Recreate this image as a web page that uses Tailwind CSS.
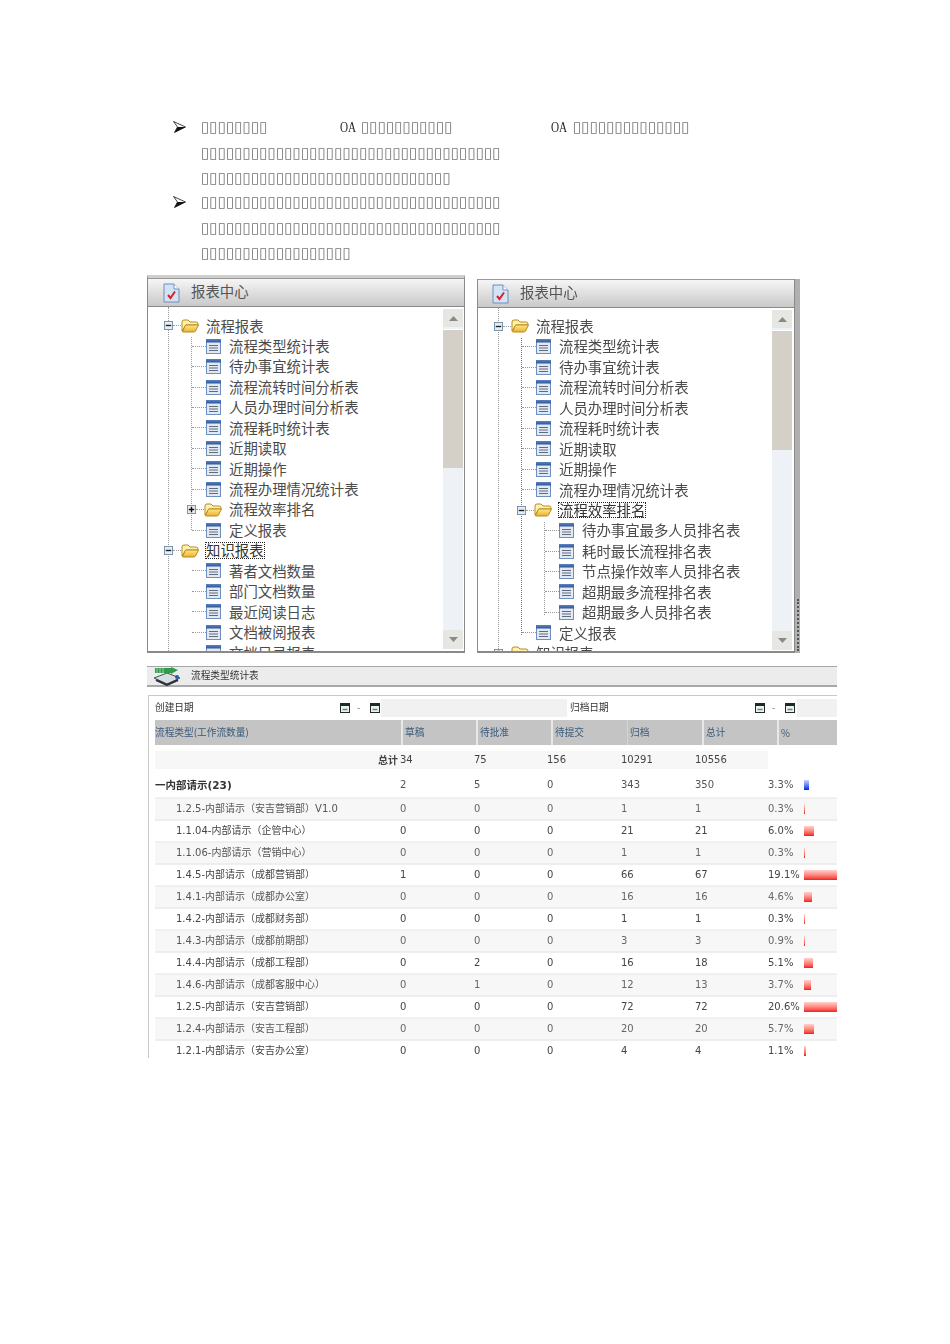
<!DOCTYPE html>
<html lang="zh">
<head>
<meta charset="utf-8">
<script src="https://cdn.jsdelivr.net/npm/@tailwindcss/browser@4"></script>
<title>报表中心</title>
</head>
<body class="bg-white">
<svg class="absolute w-0 h-0" width="0" height="0">
  <defs>
    <linearGradient id="dg" x1="0" y1="0" x2="0" y2="1"><stop offset="0" stop-color="#5b83c4"/><stop offset="1" stop-color="#2f5597"/></linearGradient>
    <linearGradient id="fg" x1="0" y1="0" x2="0" y2="1"><stop offset="0" stop-color="#ffe98a"/><stop offset="1" stop-color="#e8b030"/></linearGradient>
    <symbol id="doc" viewBox="0 0 15 15"><rect x="0.5" y="0.5" width="14" height="14" fill="#e3e9f3" stroke="#6d8fc2"/><rect x="0" y="0" width="15" height="3.5" fill="url(#dg)"/><path d="M3 6.500h9M3 9h9M3 11.500h9" stroke="#5f6c80" stroke-width="1"/></symbol>
    <symbol id="folder" viewBox="0 0 18 14"><path d="M1 12V3q0-2 2-2h4l2 2h6q2 0 2 2v1H5L1 12Z" fill="#fff2b0" stroke="#b98a1c"/><path d="M1.500 12.500 4.500 6h13l-3 6q-.5 1-2 1H2.500q-1.500 0-1-.5Z" fill="url(#fg)" stroke="#b98a1c"/></symbol>
    <symbol id="minus" viewBox="0 0 10 10"><rect x="0.500" y="0.500" width="9" height="9" fill="#e6ecf2" stroke="#6f8da8"/><path d="M2 5h6" stroke="#1f1f1f" stroke-width="1.500"/></symbol>
    <symbol id="plus" viewBox="0 0 10 10"><rect x="0.500" y="0.500" width="9" height="9" fill="#e6ecf2" stroke="#6f8da8"/><path d="M2 5h6M5 2v6" stroke="#111" stroke-width="1.500"/></symbol>
    <symbol id="report" viewBox="0 0 17 20"><path d="M1 1h10l5 5v13H1Z" fill="#d3e2f5" stroke="#6f8fbd"/><path d="M11 1v5h5" fill="#fff" stroke="#6f8fbd"/><path d="M5 12l2.500 3L12 8.500" fill="none" stroke="#d8232a" stroke-width="2"/></symbol>
    <symbol id="up" viewBox="0 0 9 5"><path d="M0 5 4.500 0 9 5Z" fill="#8a8a8a"/></symbol>
    <symbol id="down" viewBox="0 0 9 5"><path d="M0 0 4.500 5 9 0Z" fill="#8a8a8a"/></symbol>
    <symbol id="cal" viewBox="0 0 10 10"><rect x="0.500" y="0.500" width="9" height="9" fill="#eef2ee" stroke="#20282c"/><rect x="0" y="0" width="10" height="3" fill="#20282c"/><path d="M2.500 6.500h5" stroke="#4f9a4f" stroke-width="1.500"/></symbol>
    <symbol id="bullet" viewBox="0 0 13 12"><path d="M0.500 0.500 12.500 6 1.500 11.500 4.500 6Z" fill="#fff" stroke="#111" stroke-width="0.800"/><path d="M1.500 11.500 4.500 6H12.500Z" fill="#111"/></symbol>
  </defs>
</svg>

<div class="w-[950px] h-[1344px] overflow-hidden bg-white font-['Noto_Sans_CJK_SC',sans-serif]">

  <!-- paragraphs -->
  <div class="pt-[114px] pl-[173px] font-['DejaVu_Sans',sans-serif] text-[#777] text-[15px] tracking-[0.07px] whitespace-nowrap blur-[0.25px]">
    <div class="h-[26px] flex items-center relative">
      <svg class="w-[13px] h-[12px] mr-[15px]"><use href="#bullet"/></svg>
      <span class="w-[139px]">▯▯▯▯▯▯▯▯</span>
      <span class="w-[21px] origin-left scale-x-[.8] font-['Liberation_Serif',serif] text-[14px] tracking-normal text-[#222]">OA</span>
      <span class="w-[190px]">▯▯▯▯▯▯▯▯▯▯▯</span>
      <span class="w-[22px] origin-left scale-x-[.8] font-['Liberation_Serif',serif] text-[14px] tracking-normal text-[#222]">OA</span>
      <span>▯▯▯▯▯▯▯▯▯▯▯▯▯▯</span>
    </div>
    <div class="h-[26px] flex items-center pl-[28px]">▯▯▯▯▯▯▯▯▯▯▯▯▯▯▯▯▯▯▯▯▯▯▯▯▯▯▯▯▯▯▯▯▯▯▯▯</div>
    <div class="h-[24px] flex items-center pl-[28px]">▯▯▯▯▯▯▯▯▯▯▯▯▯▯▯▯▯▯▯▯▯▯▯▯▯▯▯▯▯▯</div>
    <div class="h-[24px] flex items-center">
      <svg class="w-[13px] h-[12px] mr-[15px]"><use href="#bullet"/></svg>
      <span>▯▯▯▯▯▯▯▯▯▯▯▯▯▯▯▯▯▯▯▯▯▯▯▯▯▯▯▯▯▯▯▯▯▯▯▯</span>
    </div>
    <div class="h-[28px] flex items-center pl-[28px]">▯▯▯▯▯▯▯▯▯▯▯▯▯▯▯▯▯▯▯▯▯▯▯▯▯▯▯▯▯▯▯▯▯▯▯▯</div>
    <div class="h-[22px] flex items-center pl-[28px]">▯▯▯▯▯▯▯▯▯▯▯▯▯▯▯▯▯▯</div>
  </div>

  <!-- two tree panels -->
  <div class="mt-[11px] ml-[147px] flex items-end gap-[12px] text-[14.4px] text-[#4b4b4b] blur-[0.35px]">

    <!-- panel 1 -->
    <div class="w-[318px] h-[378px] flex flex-col bg-white border-t-[3px] border-t-[#cfcfcf] border-x border-x-[#8a8a8a] border-b-2 border-b-[#8a8a8a] overflow-hidden">
      <div class="h-[29px] shrink-0 flex items-center bg-linear-to-b from-[#f6f6f6] to-[#c9c9c9] border-t border-t-[#999] border-b border-b-[#8a8a8a] text-[#555] pl-[15px]">
        <svg class="w-[17px] h-[20px] mr-[11px]"><use href="#report"/></svg><span class="pb-[3px]">报表中心</span>
      </div>
      <div class="flex-1 flex min-h-0">
        <div class="flex-1 relative overflow-hidden pt-[8.5px] leading-none">
          <div class="absolute left-[20px] top-0 bottom-0 border-l border-dotted border-[#999]"></div>
          <div class="absolute left-[43px] top-[30px] h-[193px] border-l border-dotted border-[#999]"></div>
          <div class="relative h-[20.45px] flex items-center pl-[16px]"><svg class="w-[9px] h-[9px]"><use href="#minus"/></svg><span class="w-[8px] border-t border-dotted border-[#999]"></span><svg class="w-[18px] h-[14px]"><use href="#folder"/></svg><span class="ml-[7px]">流程报表</span></div>
          <div class="relative h-[20.45px] flex items-center pl-[44px]"><span class="w-[14px] border-t border-dotted border-[#999]"></span><svg class="w-[15px] h-[15px]"><use href="#doc"/></svg><span class="ml-[8px]">流程类型统计表</span></div>
          <div class="relative h-[20.45px] flex items-center pl-[44px]"><span class="w-[14px] border-t border-dotted border-[#999]"></span><svg class="w-[15px] h-[15px]"><use href="#doc"/></svg><span class="ml-[8px]">待办事宜统计表</span></div>
          <div class="relative h-[20.45px] flex items-center pl-[44px]"><span class="w-[14px] border-t border-dotted border-[#999]"></span><svg class="w-[15px] h-[15px]"><use href="#doc"/></svg><span class="ml-[8px]">流程流转时间分析表</span></div>
          <div class="relative h-[20.45px] flex items-center pl-[44px]"><span class="w-[14px] border-t border-dotted border-[#999]"></span><svg class="w-[15px] h-[15px]"><use href="#doc"/></svg><span class="ml-[8px]">人员办理时间分析表</span></div>
          <div class="relative h-[20.45px] flex items-center pl-[44px]"><span class="w-[14px] border-t border-dotted border-[#999]"></span><svg class="w-[15px] h-[15px]"><use href="#doc"/></svg><span class="ml-[8px]">流程耗时统计表</span></div>
          <div class="relative h-[20.45px] flex items-center pl-[44px]"><span class="w-[14px] border-t border-dotted border-[#999]"></span><svg class="w-[15px] h-[15px]"><use href="#doc"/></svg><span class="ml-[8px]">近期读取</span></div>
          <div class="relative h-[20.45px] flex items-center pl-[44px]"><span class="w-[14px] border-t border-dotted border-[#999]"></span><svg class="w-[15px] h-[15px]"><use href="#doc"/></svg><span class="ml-[8px]">近期操作</span></div>
          <div class="relative h-[20.45px] flex items-center pl-[44px]"><span class="w-[14px] border-t border-dotted border-[#999]"></span><svg class="w-[15px] h-[15px]"><use href="#doc"/></svg><span class="ml-[8px]">流程办理情况统计表</span></div>
          <div class="relative h-[20.45px] flex items-center pl-[39px]"><svg class="w-[9px] h-[9px]"><use href="#plus"/></svg><span class="w-[8px] border-t border-dotted border-[#999]"></span><svg class="w-[18px] h-[14px]"><use href="#folder"/></svg><span class="ml-[7px]">流程效率排名</span></div>
          <div class="relative h-[20.45px] flex items-center pl-[44px]"><span class="w-[14px] border-t border-dotted border-[#999]"></span><svg class="w-[15px] h-[15px]"><use href="#doc"/></svg><span class="ml-[8px]">定义报表</span></div>
          <div class="relative h-[20.45px] flex items-center pl-[16px]"><svg class="w-[9px] h-[9px]"><use href="#minus"/></svg><span class="w-[8px] border-t border-dotted border-[#999]"></span><svg class="w-[18px] h-[14px]"><use href="#folder"/></svg><span class="ml-[7px] outline outline-dotted outline-[#222] text-[#333]">知识报表</span></div>
          <div class="relative h-[20.45px] flex items-center pl-[44px]"><span class="w-[14px] border-t border-dotted border-[#999]"></span><svg class="w-[15px] h-[15px]"><use href="#doc"/></svg><span class="ml-[8px]">著者文档数量</span></div>
          <div class="relative h-[20.45px] flex items-center pl-[44px]"><span class="w-[14px] border-t border-dotted border-[#999]"></span><svg class="w-[15px] h-[15px]"><use href="#doc"/></svg><span class="ml-[8px]">部门文档数量</span></div>
          <div class="relative h-[20.45px] flex items-center pl-[44px]"><span class="w-[14px] border-t border-dotted border-[#999]"></span><svg class="w-[15px] h-[15px]"><use href="#doc"/></svg><span class="ml-[8px]">最近阅读日志</span></div>
          <div class="relative h-[20.45px] flex items-center pl-[44px]"><span class="w-[14px] border-t border-dotted border-[#999]"></span><svg class="w-[15px] h-[15px]"><use href="#doc"/></svg><span class="ml-[8px]">文档被阅报表</span></div>
          <div class="relative h-[20.45px] flex items-center pl-[44px]"><span class="w-[14px] border-t border-dotted border-[#999]"></span><svg class="w-[15px] h-[15px]"><use href="#doc"/></svg><span class="ml-[8px]">文档目录报表</span></div>
        </div>
        <div class="w-[20px] mr-px mt-[2px] mb-[2px] shrink-0 flex flex-col bg-[#eef2f6]">
          <div class="h-[18px] flex items-center justify-center bg-[#e6e6e2]"><svg class="w-[9px] h-[5px]"><use href="#up"/></svg></div>
          <div class="h-[139px] mt-[2px] bg-[#d4d0c8] border-t border-white"></div>
          <div class="flex-1"></div>
          <div class="h-[19px] flex items-center justify-center bg-[#e6e6e2]"><svg class="w-[9px] h-[5px]"><use href="#down"/></svg></div>
        </div>
      </div>
    </div>

    <!-- panel 2 with resize bar -->
    <div class="flex h-[374px]">
      <div class="w-[318px] h-full flex flex-col bg-white border-x border-x-[#8a8a8a] border-b-2 border-b-[#8a8a8a] overflow-hidden">
        <div class="h-[29px] shrink-0 flex items-center bg-linear-to-b from-[#f6f6f6] to-[#c9c9c9] border-t border-t-[#999] border-b border-b-[#8a8a8a] text-[#555] pl-[14px]">
          <svg class="w-[17px] h-[20px] mr-[11px]"><use href="#report"/></svg><span class="pb-[3px]">报表中心</span>
        </div>
        <div class="flex-1 flex min-h-0">
          <div class="flex-1 relative overflow-hidden pt-[8px] leading-none">
            <div class="absolute left-[20px] top-0 bottom-0 border-l border-dotted border-[#999]"></div>
            <div class="absolute left-[43px] top-[30px] h-[297px] border-l border-dotted border-[#777]"></div>
            <div class="absolute left-[66px] top-[214px] h-[93px] border-l border-dotted border-[#999]"></div>
            <div class="relative h-[20.45px] flex items-center pl-[16px]"><svg class="w-[9px] h-[9px]"><use href="#minus"/></svg><span class="w-[8px] border-t border-dotted border-[#999]"></span><svg class="w-[18px] h-[14px]"><use href="#folder"/></svg><span class="ml-[7px]">流程报表</span></div>
            <div class="relative h-[20.45px] flex items-center pl-[44px]"><span class="w-[14px] border-t border-dotted border-[#999]"></span><svg class="w-[15px] h-[15px]"><use href="#doc"/></svg><span class="ml-[8px]">流程类型统计表</span></div>
            <div class="relative h-[20.45px] flex items-center pl-[44px]"><span class="w-[14px] border-t border-dotted border-[#999]"></span><svg class="w-[15px] h-[15px]"><use href="#doc"/></svg><span class="ml-[8px]">待办事宜统计表</span></div>
            <div class="relative h-[20.45px] flex items-center pl-[44px]"><span class="w-[14px] border-t border-dotted border-[#999]"></span><svg class="w-[15px] h-[15px]"><use href="#doc"/></svg><span class="ml-[8px]">流程流转时间分析表</span></div>
            <div class="relative h-[20.45px] flex items-center pl-[44px]"><span class="w-[14px] border-t border-dotted border-[#999]"></span><svg class="w-[15px] h-[15px]"><use href="#doc"/></svg><span class="ml-[8px]">人员办理时间分析表</span></div>
            <div class="relative h-[20.45px] flex items-center pl-[44px]"><span class="w-[14px] border-t border-dotted border-[#999]"></span><svg class="w-[15px] h-[15px]"><use href="#doc"/></svg><span class="ml-[8px]">流程耗时统计表</span></div>
            <div class="relative h-[20.45px] flex items-center pl-[44px]"><span class="w-[14px] border-t border-dotted border-[#999]"></span><svg class="w-[15px] h-[15px]"><use href="#doc"/></svg><span class="ml-[8px]">近期读取</span></div>
            <div class="relative h-[20.45px] flex items-center pl-[44px]"><span class="w-[14px] border-t border-dotted border-[#999]"></span><svg class="w-[15px] h-[15px]"><use href="#doc"/></svg><span class="ml-[8px]">近期操作</span></div>
            <div class="relative h-[20.45px] flex items-center pl-[44px]"><span class="w-[14px] border-t border-dotted border-[#999]"></span><svg class="w-[15px] h-[15px]"><use href="#doc"/></svg><span class="ml-[8px]">流程办理情况统计表</span></div>
            <div class="relative h-[20.45px] flex items-center pl-[39px]"><svg class="w-[9px] h-[9px]"><use href="#minus"/></svg><span class="w-[8px] border-t border-dotted border-[#999]"></span><svg class="w-[18px] h-[14px]"><use href="#folder"/></svg><span class="ml-[7px] outline outline-dotted outline-[#222] text-[#333]">流程效率排名</span></div>
            <div class="relative h-[20.45px] flex items-center pl-[67px]"><span class="w-[14px] border-t border-dotted border-[#999]"></span><svg class="w-[15px] h-[15px]"><use href="#doc"/></svg><span class="ml-[8px]">待办事宜最多人员排名表</span></div>
            <div class="relative h-[20.45px] flex items-center pl-[67px]"><span class="w-[14px] border-t border-dotted border-[#999]"></span><svg class="w-[15px] h-[15px]"><use href="#doc"/></svg><span class="ml-[8px]">耗时最长流程排名表</span></div>
            <div class="relative h-[20.45px] flex items-center pl-[67px]"><span class="w-[14px] border-t border-dotted border-[#999]"></span><svg class="w-[15px] h-[15px]"><use href="#doc"/></svg><span class="ml-[8px]">节点操作效率人员排名表</span></div>
            <div class="relative h-[20.45px] flex items-center pl-[67px]"><span class="w-[14px] border-t border-dotted border-[#999]"></span><svg class="w-[15px] h-[15px]"><use href="#doc"/></svg><span class="ml-[8px]">超期最多流程排名表</span></div>
            <div class="relative h-[20.45px] flex items-center pl-[67px]"><span class="w-[14px] border-t border-dotted border-[#999]"></span><svg class="w-[15px] h-[15px]"><use href="#doc"/></svg><span class="ml-[8px]">超期最多人员排名表</span></div>
            <div class="relative h-[20.45px] flex items-center pl-[44px]"><span class="w-[14px] border-t border-dotted border-[#999]"></span><svg class="w-[15px] h-[15px]"><use href="#doc"/></svg><span class="ml-[8px]">定义报表</span></div>
            <div class="relative h-[20.45px] flex items-center pl-[16px]"><svg class="w-[9px] h-[9px]"><use href="#plus"/></svg><span class="w-[8px] border-t border-dotted border-[#999]"></span><svg class="w-[18px] h-[14px]"><use href="#folder"/></svg><span class="ml-[7px]">知识报表</span></div>
          </div>
          <div class="w-[20px] mr-[2px] mt-[2px] mb-[1px] shrink-0 flex flex-col bg-[#eef2f6]">
            <div class="h-[18px] flex items-center justify-center bg-[#e6e6e2]"><svg class="w-[9px] h-[5px]"><use href="#up"/></svg></div>
            <div class="h-[120px] mt-[2px] bg-[#d4d0c8] border-t border-white"></div>
            <div class="flex-1"></div>
            <div class="h-[19px] flex items-center justify-center bg-[#e6e6e2]"><svg class="w-[9px] h-[5px]"><use href="#down"/></svg></div>
          </div>
        </div>
      </div>
      <div class="w-[5px] h-full flex flex-col justify-end items-center bg-[#b0b0b0] pb-[2px]">
        <div class="h-[52px] border-l-2 border-dotted border-[#555]"></div>
      </div>
    </div>
  </div>

  <!-- statistics panel -->
  <div class="mt-[13px] ml-[147px] w-[690px] h-[392px] overflow-hidden font-['DejaVu_Sans','Noto_Sans_CJK_SC',sans-serif] text-[10px] leading-none text-[#444] blur-[0.35px]">
    <div class="h-[21px] flex items-center bg-[#ececec] border-t border-t-[#a8a8a8] border-b-2 border-b-[#a8a8a8] pl-[6px]">
      <svg class="w-[28px] h-[19px] mr-[10px]" viewBox="0 0 28 19"><path d="M1 11 14 6l13 5-13 6Z" fill="#d8dde2" stroke="#4a4f55"/><path d="M3 13l11 5 11-5" fill="none" stroke="#2f3338" stroke-width="2"/><path d="M2 1h16V0l7 3-7 4V6H2Z" fill="#2f9a4a"/><path d="M4 1v5M7 1v5M10 1v5" stroke="#9fd8ac"/><circle cx="24" cy="10" r="2" fill="#1f5fb0"/></svg>
      <span class="text-[9.7px] font-['Noto_Sans_CJK_SC',sans-serif] text-[#333]">流程类型统计表</span>
    </div>
    <div class="mt-[8px] ml-px pl-[6px] pt-[3px] border-l border-t border-[#c8c8c8] h-[400px]">
      <!-- date filters -->
      <div class="h-[18px] grid grid-cols-[185px_41px_186px_183px_47px_40px] items-center font-['Noto_Sans_CJK_SC',sans-serif] text-[9.7px] text-[#333]">
        <span>创建日期</span>
        <div class="h-full flex items-center gap-[7px] text-[#777]"><svg class="w-[10px] h-[10px]"><use href="#cal"/></svg><span>-</span><svg class="ml-[3px] w-[10px] h-[10px]"><use href="#cal"/></svg></div>
        <div class="h-full bg-[#f1f1f1]"></div>
        <span class="pl-[3px]">归档日期</span>
        <div class="h-full flex items-center gap-[7px] pl-[5px] text-[#777]"><svg class="w-[10px] h-[10px]"><use href="#cal"/></svg><span>-</span><svg class="ml-[3px] w-[10px] h-[10px]"><use href="#cal"/></svg></div>
        <div class="h-full bg-[#f1f1f1]"></div>
      </div>
      <!-- header -->
      <div class="mt-[3px] h-[25px] grid grid-cols-[248px_75px_75px_75px_76px_75px_58px] bg-[#c4c4c4] text-[#3a5a7c] font-['Noto_Sans_CJK_SC',sans-serif] text-[9.7px]">
        <span class="flex items-center border-r-2 border-[#e8e8e8]">流程类型(工作流数量)</span>
        <span class="flex items-center pl-[2px] border-r-2 border-[#e8e8e8]">草稿</span>
        <span class="flex items-center pl-[2px] border-r-2 border-[#e8e8e8]">待批准</span>
        <span class="flex items-center pl-[2px] border-r border-[#d4d4d4]">待提交</span>
        <span class="flex items-center pl-[2px] border-r-2 border-[#e8e8e8]">归档</span>
        <span class="flex items-center pl-[2px] border-r-2 border-[#e8e8e8]">总计</span>
        <span class="flex items-center pl-[2px] pt-[3px]">%</span>
      </div>
      <!-- total -->
      <div class="mt-[6px] h-[18px] grid grid-cols-[245px_74px_73px_74px_74px_73px_69px] items-center bg-[#f7f7f7] text-[#444]">
        <span class="text-right pr-[2px] font-bold font-['Noto_Sans_CJK_SC',sans-serif]">总计</span><span>34</span><span>75</span><span>156</span><span>10291</span><span>10556</span><span class="h-full bg-white"></span>
      </div>
      <!-- group -->
      <div class="mt-[5px] h-[25px] pb-px grid grid-cols-[245px_74px_73px_74px_74px_73px_36px_33px] items-center border-b-2 border-[#f0f0f0] text-[#555]">
        <span class="font-bold text-[10.5px] text-[#333]">一内部请示(23)</span><span>2</span><span>5</span><span>0</span><span>343</span><span>350</span><span>3.3%</span><span class="w-[5px] h-[10px] bg-linear-to-b from-[#d0d0ff] to-[#1010e0]"></span>
      </div>
      <!-- rows -->
      <div class="h-[22px] grid grid-cols-[245px_74px_73px_74px_74px_73px_36px_33px] items-center bg-[#f7f7f7] border-b-2 border-[#eeeeee] text-[#666]">
        <span class="pl-[21px] text-[#555]">1.2.5-内部请示（安吉营销部）V1.0</span><span>0</span><span>0</span><span>0</span><span>1</span><span>1</span><span>0.3%</span><span class="w-px h-[10px] bg-linear-to-b from-[#ffd0d0] to-[#f01020]"></span>
      </div>
      <div class="h-[22px] grid grid-cols-[245px_74px_73px_74px_74px_73px_36px_33px] items-center bg-white border-b-2 border-[#f0f0f0] text-[#444]">
        <span class="pl-[21px] text-[#444]">1.1.04-内部请示（企管中心）</span><span>0</span><span>0</span><span>0</span><span>21</span><span>21</span><span>6.0%</span><span class="w-[10px] h-[10px] bg-linear-to-b from-[#ffd0d0] to-[#f01020]"></span>
      </div>
      <div class="h-[22px] grid grid-cols-[245px_74px_73px_74px_74px_73px_36px_33px] items-center bg-[#f7f7f7] border-b-2 border-[#eeeeee] text-[#666]">
        <span class="pl-[21px] text-[#555]">1.1.06-内部请示（营销中心）</span><span>0</span><span>0</span><span>0</span><span>1</span><span>1</span><span>0.3%</span><span class="w-px h-[10px] bg-linear-to-b from-[#ffd0d0] to-[#f01020]"></span>
      </div>
      <div class="h-[22px] grid grid-cols-[245px_74px_73px_74px_74px_73px_36px_33px] items-center bg-white border-b-2 border-[#f0f0f0] text-[#444]">
        <span class="pl-[21px] text-[#444]">1.4.5-内部请示（成都营销部）</span><span>1</span><span>0</span><span>0</span><span>66</span><span>67</span><span>19.1%</span><span class="w-[33px] h-[10px] bg-linear-to-b from-[#ffd0d0] to-[#f01020]"></span>
      </div>
      <div class="h-[22px] grid grid-cols-[245px_74px_73px_74px_74px_73px_36px_33px] items-center bg-[#f7f7f7] border-b-2 border-[#eeeeee] text-[#666]">
        <span class="pl-[21px] text-[#555]">1.4.1-内部请示（成都办公室）</span><span>0</span><span>0</span><span>0</span><span>16</span><span>16</span><span>4.6%</span><span class="w-[8px] h-[10px] bg-linear-to-b from-[#ffd0d0] to-[#f01020]"></span>
      </div>
      <div class="h-[22px] grid grid-cols-[245px_74px_73px_74px_74px_73px_36px_33px] items-center bg-white border-b-2 border-[#f0f0f0] text-[#444]">
        <span class="pl-[21px] text-[#444]">1.4.2-内部请示（成都财务部）</span><span>0</span><span>0</span><span>0</span><span>1</span><span>1</span><span>0.3%</span><span class="w-px h-[10px] bg-linear-to-b from-[#ffd0d0] to-[#f01020]"></span>
      </div>
      <div class="h-[22px] grid grid-cols-[245px_74px_73px_74px_74px_73px_36px_33px] items-center bg-[#f7f7f7] border-b-2 border-[#eeeeee] text-[#666]">
        <span class="pl-[21px] text-[#555]">1.4.3-内部请示（成都前期部）</span><span>0</span><span>0</span><span>0</span><span>3</span><span>3</span><span>0.9%</span><span class="w-px h-[10px] bg-linear-to-b from-[#ffd0d0] to-[#f01020]"></span>
      </div>
      <div class="h-[22px] grid grid-cols-[245px_74px_73px_74px_74px_73px_36px_33px] items-center bg-white border-b-2 border-[#f0f0f0] text-[#444]">
        <span class="pl-[21px] text-[#444]">1.4.4-内部请示（成都工程部）</span><span>0</span><span>2</span><span>0</span><span>16</span><span>18</span><span>5.1%</span><span class="w-[9px] h-[10px] bg-linear-to-b from-[#ffd0d0] to-[#f01020]"></span>
      </div>
      <div class="h-[22px] grid grid-cols-[245px_74px_73px_74px_74px_73px_36px_33px] items-center bg-[#f7f7f7] border-b-2 border-[#eeeeee] text-[#666]">
        <span class="pl-[21px] text-[#555]">1.4.6-内部请示（成都客服中心）</span><span>0</span><span>1</span><span>0</span><span>12</span><span>13</span><span>3.7%</span><span class="w-[7px] h-[10px] bg-linear-to-b from-[#ffd0d0] to-[#f01020]"></span>
      </div>
      <div class="h-[22px] grid grid-cols-[245px_74px_73px_74px_74px_73px_36px_33px] items-center bg-white border-b-2 border-[#f0f0f0] text-[#444]">
        <span class="pl-[21px] text-[#444]">1.2.5-内部请示（安吉营销部）</span><span>0</span><span>0</span><span>0</span><span>72</span><span>72</span><span>20.6%</span><span class="w-[33px] h-[10px] bg-linear-to-b from-[#ffd0d0] to-[#f01020]"></span>
      </div>
      <div class="h-[22px] grid grid-cols-[245px_74px_73px_74px_74px_73px_36px_33px] items-center bg-[#f7f7f7] border-b-2 border-[#eeeeee] text-[#666]">
        <span class="pl-[21px] text-[#555]">1.2.4-内部请示（安吉工程部）</span><span>0</span><span>0</span><span>0</span><span>20</span><span>20</span><span>5.7%</span><span class="w-[10px] h-[10px] bg-linear-to-b from-[#ffd0d0] to-[#f01020]"></span>
      </div>
      <div class="h-[22px] grid grid-cols-[245px_74px_73px_74px_74px_73px_36px_33px] items-center bg-white border-b-2 border-[#f0f0f0] text-[#444]">
        <span class="pl-[21px] text-[#444]">1.2.1-内部请示（安吉办公室）</span><span>0</span><span>0</span><span>0</span><span>4</span><span>4</span><span>1.1%</span><span class="w-[2px] h-[10px] bg-linear-to-b from-[#ffd0d0] to-[#f01020]"></span>
      </div>
    </div>
  </div>
</div>
</body>
</html>
